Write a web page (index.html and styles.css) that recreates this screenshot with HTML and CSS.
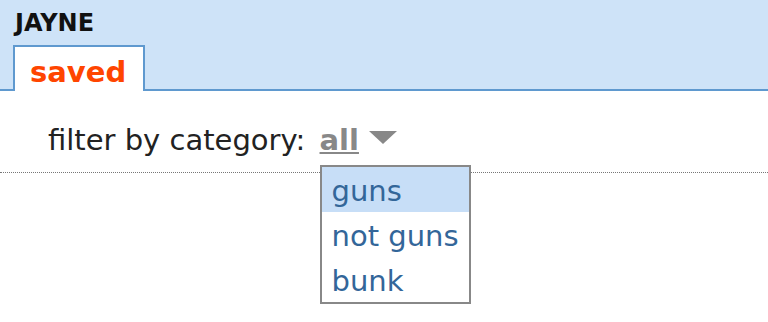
FILE: index.html
```html
<!DOCTYPE html>
<html lang="en">
<head>
    <meta charset="UTF-8">
    <meta name="viewport" content="width=device-width, initial-scale=1.0">
    <title>JAYNE - saved</title>
    <link rel="stylesheet" href="styles.css">
</head>
<body>
    <div class="header">
        <div class="username">JAYNE</div>
        <ul class="tabmenu">
            <li class="selected">saved</li>
        </ul>
    </div>

    <div class="filter-bar">
        filter by category:
        <span class="dropdown">
            <span class="selected-option">all</span><span class="arrow"></span>
            <ul class="dropdown-menu">
                <li class="active">guns</li>
                <li>not guns</li>
                <li>bunk</li>
            </ul>
        </span>
    </div>
</body>
</html>
```

FILE: styles.css
```css
html, body {
    min-height: 100%;
}

body {
    margin: 0;
    min-height: 322px;
    background: white;
    font-family: "DejaVu Sans", Verdana, sans-serif;
    color: #222;
}

.header {
    height: 78px;
    padding: 11px 0 0 13px;
    background: #cee3f8;
    border-bottom: 2px solid #5f99cf;
}

.username {
    padding-left: 2px;
    font-size: 24px;
    line-height: 24px;
    font-weight: bold;
    color: #111;
}

.tabmenu {
    display: flex;
    list-style: none;
    margin: 10px 0 0 0;
    padding: 0;
}

.tabmenu li {
    background: white;
    border: 2px solid #5f99cf;
    border-bottom: none;
    padding: 8px 17px 2px 15px;
    margin-bottom: -2px;
    font-size: 29px;
    line-height: 34px;
    font-weight: bold;
    color: #ff4500;
}

.filter-bar {
    margin-top: 32px;
    padding: 0 0 15px 48px;
    font-size: 29px;
    line-height: 34px;
    border-bottom: 1px dotted #777;
}

.dropdown {
    position: relative;
    display: inline-block;
    margin-left: 5px;
}

.selected-option {
    font-weight: bold;
    color: #888;
    text-decoration: underline;
}

.arrow {
    display: inline-block;
    width: 0;
    height: 0;
    margin-left: 10px;
    border-left: 14px solid transparent;
    border-right: 14px solid transparent;
    border-top: 13px solid #888;
    vertical-align: 6px;
}

.dropdown-menu {
    position: absolute;
    top: 42px;
    left: 0;
    z-index: 1;
    width: 147px;
    margin: 0;
    padding: 0;
    list-style: none;
    background: white;
    border: 2px solid #888;
}

.dropdown-menu li {
    padding: 3px 0 0 10px;
    font-size: 29px;
    line-height: 42px;
    color: #336699;
    white-space: nowrap;
}

.dropdown-menu li.active {
    background: #c7def7;
}
```
